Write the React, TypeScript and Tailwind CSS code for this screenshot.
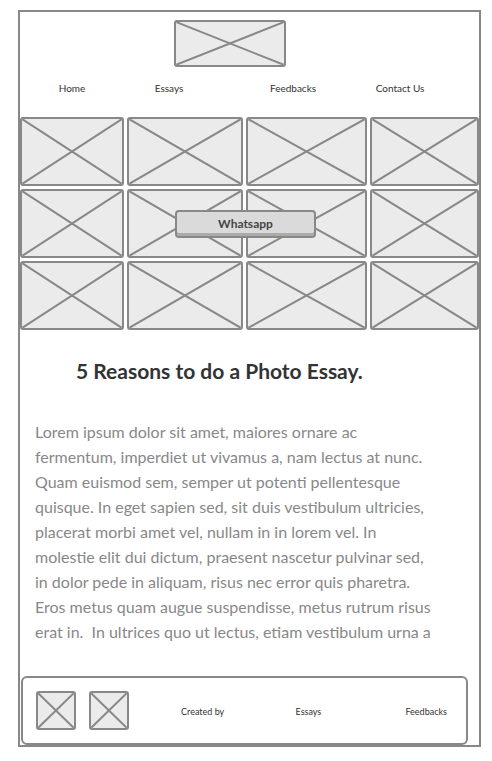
import type { ReactNode } from 'react';

const FONT = "font-['Lato','Noto_Sans',sans-serif]";

const PARAGRAPH = [
  'Lorem ipsum dolor sit amet, maiores ornare ac',
  'fermentum, imperdiet ut vivamus a, nam lectus at nunc.',
  'Quam euismod sem, semper ut potenti pellentesque',
  'quisque. In eget sapien sed, sit duis vestibulum ultricies,',
  'placerat morbi amet vel, nullam in in lorem vel. In',
  'molestie elit dui dictum, praesent nascetur pulvinar sed,',
  'in dolor pede in aliquam, risus nec error quis pharetra.',
  'Eros metus quam augue suspendisse, metus rutrum risus',
  'erat in.\u00a0 In ultrices quo ut lectus, etiam vestibulum urna a',
];

// wireframe image placeholder: grey box with an X across it
function Placeholder({ className = '' }: { className?: string }): ReactNode {
  return (
    <div className={`overflow-hidden rounded-[3px] border-2 border-[#888] bg-[#ebebeb] ${className}`}>
      <svg className="block h-full w-full" viewBox="0 0 100 100" preserveAspectRatio="none">
        <line x1="0" y1="0" x2="100" y2="100" stroke="#888" strokeWidth="2" vectorEffect="non-scaling-stroke" />
        <line x1="100" y1="0" x2="0" y2="100" stroke="#888" strokeWidth="2" vectorEffect="non-scaling-stroke" />
      </svg>
    </div>
  );
}

export default function App() {
  return (
    <div className={`min-h-[761px] bg-white pl-[18px] pt-[10px] ${FONT}`}>
      <div className="flex h-[737px] w-[463px] flex-col border-2 border-[#888]">
        {/* Logo */}
        <Placeholder className="ml-[154px] mt-[8px] h-[47px] w-[112px]" />

        {/* Nav */}
        <nav className="mt-[15px] grid h-[12px] grid-cols-[104px_90px_158px_56px] text-center text-[10px] leading-[12px] text-[#333]">
          <span className="whitespace-nowrap">Home</span>
          <span className="whitespace-nowrap">Essays</span>
          <span className="whitespace-nowrap">Feedbacks</span>
          <span className="whitespace-nowrap">Contact Us</span>
        </nav>

        {/* Gallery */}
        <div className="relative mt-[23px]">
          <div className="grid grid-cols-[104px_116px_121px_109px] grid-rows-[69px_69px_69px] gap-x-[3px] gap-y-[3px]">
            {Array.from({ length: 12 }).map((_, i) => (
              <Placeholder key={i} className="h-full w-full" />
            ))}
          </div>
          <button
            type="button"
            className="absolute left-[155px] top-[93px] h-[28px] w-[141px] rounded-[4px] border-2 border-[#888] bg-[#dadada] pt-[1px] text-[12px] font-bold text-[#444] shadow-[inset_0_-3px_0_#ababab]"
          >
            Whatsapp
          </button>
        </div>

        {/* Article */}
        <h1 className="ml-[56px] mt-[29px] text-[21px] font-bold leading-[24px] text-[#333]">
          5 Reasons to do a Photo Essay.
        </h1>
        <div className="ml-[15px] mt-[36px] h-[225px] overflow-hidden text-[16px] leading-[25px] text-[#888]">
          {PARAGRAPH.map((line, i) => (
            <div key={i} className="whitespace-nowrap">
              {line}
            </div>
          ))}
        </div>

        {/* Footer */}
        <footer className="ml-px mt-[33px] flex h-[69px] w-[447px] items-center rounded-[6px] border-2 border-[#888] bg-white text-[9px] text-[#333]">
          <Placeholder className="ml-[13px] h-[39px] w-[40px]" />
          <Placeholder className="ml-[13px] h-[39px] w-[40px]" />
          <span className="ml-[34px] mt-[3px] w-[80px] text-center">Created by</span>
          <span className="ml-[26px] mt-[3px] w-[80px] text-center">Essays</span>
          <span className="ml-[38px] mt-[3px] w-[80px] text-center">Feedbacks</span>
        </footer>
      </div>
    </div>
  );
}
